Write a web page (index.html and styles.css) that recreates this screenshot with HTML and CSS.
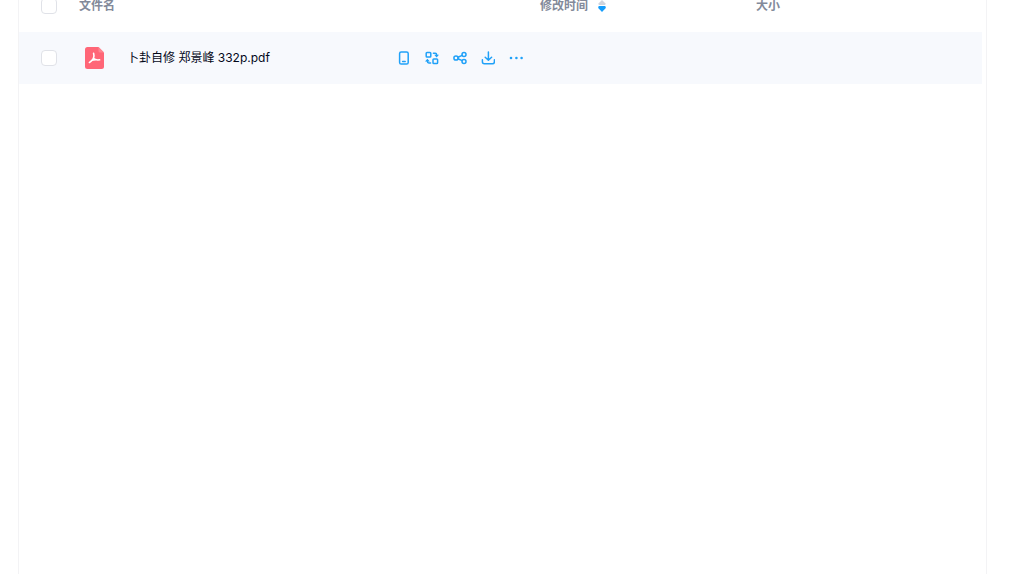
FILE: index.html
```html
<!DOCTYPE html>
<html lang="zh-CN">
<head>
<meta charset="utf-8">
<title>文件</title>
<link rel="stylesheet" href="styles.css">
</head>
<body>
<main class="panel">
  <table class="files">
    <colgroup><col class="col-check"><col><col class="col-time"><col class="col-size"></colgroup>
    <thead>
      <tr>
        <th class="pick"><input class="check" type="checkbox" aria-label="全选"></th>
        <th>文件名</th>
        <th><button class="sort" type="button">修改时间
          <svg width="8" height="14" viewBox="0 0 8 14" aria-hidden="true"><path fill="#d0d4dd" d="M4 1 7.3 4.3Q8 6 6.8 6H1.2Q0 6 .7 4.3Z"/><path fill="#159dfb" d="M1.2 7H6.8Q8 7 7.8 9L4 13 .2 9Q0 7 1.2 7Z"/></svg></button></th>
        <th>大小</th>
      </tr>
    </thead>
    <tbody>
      <tr>
        <td class="pick"><input class="check" type="checkbox" aria-label="选择 卜卦自修 郑景峰 332p.pdf"></td>
        <td>
          <div class="file">
            <svg class="pdf" width="20" height="22" viewBox="0 0 20 22" aria-hidden="true"><path fill="#ff6677" d="M2.5 0H13.5L19 5.5V19.5Q19 22 16.5 22H2.5Q0 22 0 19.5V2.5Q0 0 2.5 0Z"/><path fill="#ff8590" d="M13.5 0 19 5.5H15Q13.5 5.5 13.5 4Z"/><path d="M8.6 6.2C9.2 8 9 9.8 8.4 11.4M8.4 11.4C7.6 13.4 6.2 14.6 4.4 15.4M8.4 11.4C10 12.8 12 13.2 14.6 12.8M6.4 13.6C8.2 12.9 9.6 12.7 11.6 12.8" fill="none" stroke="#fff" stroke-width="1.6" stroke-linecap="round" stroke-linejoin="round"/></svg>
            <a class="name" href="#">卜卦自修 郑景峰 332p.pdf</a>
            <div class="actions">
              <button type="button" aria-label="发送到手机"><svg viewBox="0 0 14 14"><rect x="2.6" y="1" width="8.6" height="12" rx="1.6"/><path d="M5.6 10.6h2.6"/></svg></button>
              <button type="button" aria-label="格式转换"><svg viewBox="0 0 14 14"><rect x="1.2" y="1.4" width="4.6" height="4.6" rx=".8"/><rect x="8" y="8" width="4.6" height="4.6" rx=".8"/><path d="M8.4 2.2h1.8q1.4 0 1.4 1.4v.8M5.6 12H3.8q-1.4 0-1.4-1.4V9.8"/><path class="solid" d="M9.2 3.8h4.8l-2.4 2.6ZM0 10.4h4.8L2.4 7.8Z"/></svg></button>
              <button type="button" aria-label="分享"><svg viewBox="0 0 14 14"><circle cx="3" cy="7" r="2.1"/><circle cx="11" cy="3.6" r="2"/><circle cx="11" cy="10.4" r="2"/><path d="M5 6.2 9.1 4.4M5 7.8l4.1 1.8"/></svg></button>
              <button type="button" aria-label="下载"><svg viewBox="0 0 14 14"><path d="M7.4 1v8M4.2 6.2l3.2 3 3.2-3M1.4 8.8v2q0 2 2 2h8q2 0 2-2v-2"/></svg></button>
              <button type="button" aria-label="更多"><svg viewBox="0 0 14 14"><g class="solid"><circle cx="2" cy="7" r="1.3"/><circle cx="7.4" cy="7" r="1.3"/><circle cx="12.6" cy="7" r="1.3"/></g></svg></button>
            </div>
          </div>
        </td>
        <td></td>
        <td></td>
      </tr>
    </tbody>
  </table>
</main>
</body>
</html>
```
FILE: styles.css
```css
* {
  box-sizing: border-box;
}

body {
  margin: 0;
  background: #fff;
  color: #03081a;
  font: 12px/18px Inter, "Liberation Sans", "Noto Sans CJK SC", sans-serif;
}

.panel {
  display: flow-root;
  min-height: 100vh;
  margin: 0 37px 0 18px;
  padding-right: 4px;
  border: solid #f3f3f5;
  border-width: 0 1px;
}

/* The list is scrolled so that its heading is partly out of view. */
.files {
  width: 100%;
  margin-top: -20px;
  table-layout: fixed;
  border-collapse: collapse;
}

.col-check { width: 60px; }
.col-time { width: 216px; }
.col-size { width: 226px; }

th,
td {
  height: 52px;
  padding: 0;
  text-align: left;
  vertical-align: middle;
}

th {
  color: #838a9a;
  font-weight: 700;
  line-height: 12px;
}

tbody tr {
  background: #f7f9fd;
}

.files .pick {
  padding-left: 22px;
}

.check {
  display: block;
  width: 16px;
  height: 16px;
  margin: 0;
  appearance: none;
  background: #fff;
  border: 1px solid #e0e2e8;
  border-radius: 4px;
}

button {
  padding: 0;
  border: 0;
  background: none;
  color: inherit;
  font: inherit;
  cursor: pointer;
}

.sort {
  display: flex;
  align-items: center;
  gap: 10px;
}

.file {
  display: flex;
  align-items: center;
  padding-left: 6px;
}

.pdf {
  margin-right: 22px;
}

.name {
  flex: 1;
  color: inherit;
  text-decoration: none;
  white-space: nowrap;
}

.actions {
  display: flex;
  gap: 14px;
  padding-right: 17px;
}

.actions svg {
  display: block;
  width: 14px;
  height: 14px;
  fill: none;
  stroke: #20a1f8;
  stroke-width: 1.5;
  stroke-linecap: round;
  stroke-linejoin: round;
}

.actions .solid {
  fill: #20a1f8;
  stroke: none;
}
```
